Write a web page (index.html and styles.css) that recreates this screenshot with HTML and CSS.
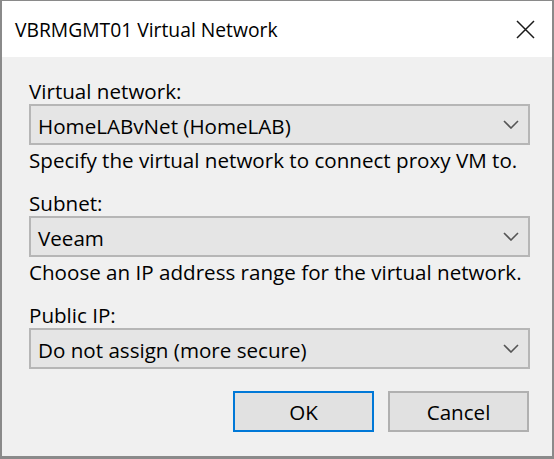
FILE: index.html
```html
<!DOCTYPE html>
<html>
<head>
<meta charset="utf-8">
<link rel="stylesheet" href="styles.css">
</head>
<body>
<div class="window">
  <div class="titlebar">
    <span class="title">VBRMGMT01 Virtual Network</span>
    <svg class="close" width="19" height="19" viewBox="0 0 19 19"><path d="M1 1 L18 18 M18 1 L1 18" stroke="#1a1a1a" stroke-width="1.5" fill="none"/></svg>
  </div>
  <div class="client">
    <div class="field">
      <div class="label">Virtual network:</div>
      <div class="combo"><span>HomeLABvNet (HomeLAB)</span><svg class="chev" width="16" height="9" viewBox="0 0 16 9"><path d="M1 1 L8 8 L15 1" stroke="#555" stroke-width="1.6" fill="none"/></svg></div>
      <div class="help">Specify the virtual network to connect proxy VM to.</div>
    </div>
    <div class="field">
      <div class="label">Subnet:</div>
      <div class="combo"><span>Veeam</span><svg class="chev" width="16" height="9" viewBox="0 0 16 9"><path d="M1 1 L8 8 L15 1" stroke="#555" stroke-width="1.6" fill="none"/></svg></div>
      <div class="help">Choose an IP address range for the virtual network.</div>
    </div>
    <div class="field">
      <div class="label">Public IP:</div>
      <div class="combo"><span>Do not assign (more secure)</span><svg class="chev" width="16" height="9" viewBox="0 0 16 9"><path d="M1 1 L8 8 L15 1" stroke="#555" stroke-width="1.6" fill="none"/></svg></div>
    </div>
    <div class="buttons">
      <div class="btn default">OK</div>
      <div class="btn">Cancel</div>
    </div>
  </div>
</div>
</body>
</html>
```

FILE: styles.css
```css
html, body {
  margin: 0;
  padding: 0;
  background: #f0f0f0;
}
.window {
  width: 554px;
  height: 459px;
  box-sizing: border-box;
  border-style: solid;
  border-color: #8a8a8a;
  border-width: 1px 2px 3px 2px;
  background: #f0f0f0;
  font-family: "Open Sans", "Noto Sans", sans-serif;
  font-size: 20.6px;
  color: #000;
  display: flex;
  flex-direction: column;
}
.titlebar {
  height: 56px;
  background: #fff;
  display: flex;
  align-items: center;
  justify-content: space-between;
  padding: 0 17px 0 13px;
  flex: none;
}
.title {
  font-size: 19.3px;
  line-height: 26px;
  margin-top: 2px;
}
.close {
  display: block;
}
.client {
  flex: 1;
  padding: 21px 22px 0 27px;
  display: flex;
  flex-direction: column;
}
.field + .field {
  margin-top: 17px;
}
.label, .help {
  line-height: 26px;
  height: 26px;
  white-space: nowrap;
}
.help {
  padding-top: 2px;
}
.combo {
  height: 41px;
  box-sizing: border-box;
  border: 2px solid #b6b6b6;
  background: #e5e5e5;
  display: flex;
  align-items: center;
  justify-content: space-between;
  padding: 0 9px 0 7px;
}
.combo span {
  line-height: 26px;
  margin-top: 2px;
}
.chev {
  display: block;
}
.buttons {
  margin-top: 22px;
  display: flex;
  justify-content: flex-end;
  gap: 14px;
  padding-right: 1px;
}
.btn {
  width: 141px;
  height: 41px;
  box-sizing: border-box;
  border: 2px solid #b0b0b0;
  background: #e1e1e1;
  display: flex;
  align-items: center;
  justify-content: center;
}
.btn.default {
  border-color: #0078d7;
}
```
